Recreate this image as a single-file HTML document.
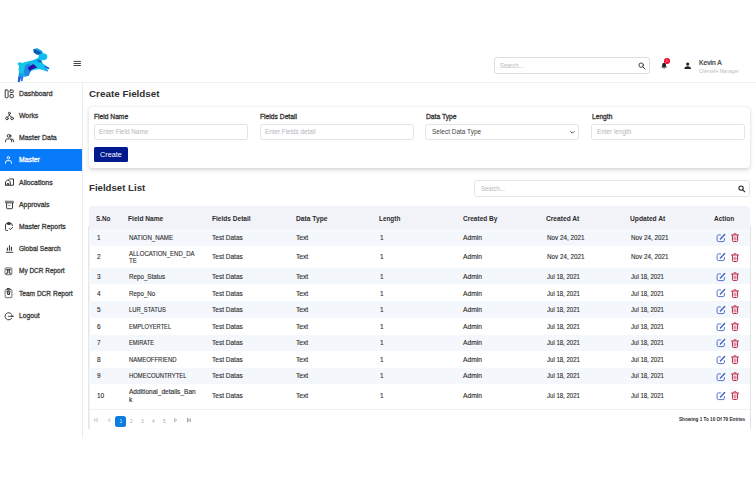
<!DOCTYPE html>
<html><head><meta charset="utf-8"><title>Fieldset</title>
<style>
*{box-sizing:border-box;margin:0;padding:0}
html,body{width:756px;height:486px;background:#fff;overflow:hidden}
body{font-family:"Liberation Sans",sans-serif;position:relative;color:#333}
.t{position:absolute;white-space:nowrap;display:block;transform-origin:0 50%;line-height:12px}
.abs{position:absolute}
.inp{position:absolute;border:1px solid #e1e4e9;border-radius:2.5px;background:#fff}
.row{position:absolute;left:88.7px;width:661.6px}
.ic{position:absolute;overflow:visible}
</style></head><body>

<div class="abs" style="left:0;top:81.7px;width:756px;height:1px;background:#f0f0f0"></div>
<div class="abs" style="left:82px;top:82px;width:1px;height:355.5px;background:#ececec"></div>
<svg class="ic" style="left:10px;top:42px" width="54" height="44" viewBox="0 0 596 486">
<polygon points="255,80 300,73 345,96 364,128 332,144 290,138 262,114" fill="#0b58b4"/>
<polygon points="262,78 305,73 352,100 364,128 338,112 300,92" fill="#0aa6ee"/>
<ellipse cx="363" cy="163" rx="49" ry="38" fill="#14c8f2"/>
<polygon points="316,150 360,132 402,150 410,176 372,198 330,188" fill="#10beee"/>
<polygon points="118,238 260,198 322,168 356,232 308,292 226,324 206,374 150,386 106,374 96,300 106,250" fill="#10b8ee"/>
<polygon points="118,238 205,214 175,300 150,386 106,374 96,300 106,250" fill="#15c6e8"/>
<polygon points="172,250 218,234 228,324 206,374 165,382 150,330" fill="#1f88e4"/>
<polygon points="306,192 345,200 362,240 330,232 300,212" fill="#0b78c4"/>
<ellipse cx="108" cy="242" rx="25" ry="18" fill="#12c0ee"/>
<polygon points="270,232 345,226 434,286 428,302 402,294 420,312 414,326 330,302 268,304 250,282" fill="#12c2f0"/>
<polygon points="380,262 436,286 428,302 385,282" fill="#2a58e2"/>
<polygon points="385,302 420,312 414,326 388,316" fill="#3a90ea"/>
<polygon points="198,282 258,244 300,282 244,302 214,320" fill="#2a0aa8"/>
<polygon points="98,340 152,350 134,432 118,434 122,382 104,442 86,438" fill="#169fea"/>
<polygon points="94,380 122,384 104,444 86,440" fill="#2f4fe0"/>
<polygon points="124,396 148,386 136,434 120,434" fill="#1f7fe6"/>
</svg>
<svg class="ic" style="left:73px;top:60px" width="9" height="7" viewBox="0 0 9 7" fill="none" stroke="#3a3a3a" stroke-width=".95" stroke-linecap="round"><path d="M.9 1.400H7.500M.9 3.500H7.500M.9 5.500H7.500"/></svg>
<div class="inp" style="left:494.4px;top:57.2px;width:155.4px;height:16.9px;border-color:#dcdfe4"></div>
<span class="t m " style="left:499.70px;top:60px;font-size:7.0px;color:#b5b8be;transform:scaleX(0.8317);">Search...</span>
<svg class="ic" style="left:638px;top:62px" width="7.6" height="7.6" viewBox="0 0 24 24" fill="none" stroke="#3a3a3a" stroke-width="3.1" stroke-linecap="round"><circle cx="10" cy="10" r="7"/><path d="M15.5 15.5L22 22"/></svg>
<svg class="ic" style="left:660.5px;top:62.1px" width="6.2" height="7.2" viewBox="0 0 20 22"><path d="M10 1.5c-3.6 0-6 2.7-6 6.2v4.6L1.5 16v1.5h17V16L16 12.3V7.700c0-3.500-2.400-6.200-6-6.200z" fill="#222"/><path d="M7.500 19a2.600 2.600 0 0 0 5 0z" fill="#222"/></svg>
<div class="abs" style="left:664.3px;top:58.3px;width:5.5px;height:5.5px;border-radius:50%;background:#f5143c"></div>
<span class="t" style="left:666.1px;top:59.7px;font-size:3px;line-height:3px;color:#ffb0c0">0</span>
<svg class="ic" style="left:683.8px;top:62px" width="7.4" height="7.2" viewBox="0 0 24 24"><circle cx="12" cy="7" r="5.2" fill="#222"/><path d="M1 23c0-6 4-9 11-9s11 3 11 9z" fill="#222"/></svg>
<span class="t m " style="left:699.20px;top:57px;font-size:7.0px;color:#3a3a3a;-webkit-text-stroke:0.22px #3a3a3a;transform:scaleX(0.9605);">Kevin A</span>
<span class="t m " style="left:699.20px;top:65px;font-size:5.4px;color:#bdbdbd;transform:scaleX(0.9127);">Clientele Manager</span>
<svg class="ic" style="left:4px;top:88.60px" width="11" height="11" viewBox="0 0 11 11" fill="none" stroke="#3a3a3a" stroke-width="1" stroke-linecap="round" stroke-linejoin="round"><rect x="1.2" y="1.0" width="2.900" height="7.700" rx=".7"/><rect x="6.000" y="1.0" width="3.300" height="2.600" rx=".7"/><rect x="6.000" y="5.500" width="3.300" height="3.200" rx=".7"/></svg>
<span class="t m sb" style="left:19.10px;top:88px;font-size:6.9px;color:#3d3d3d;-webkit-text-stroke:0.3px #3d3d3d;transform:scaleX(0.9924);">Dashboard</span>
<svg class="ic" style="left:4px;top:110.80px" width="11" height="11" viewBox="0 0 11 11" fill="none" stroke="#3a3a3a" stroke-width="1" stroke-linecap="round" stroke-linejoin="round"><circle cx="5.400" cy="2.300" r="1.050"/><circle cx="3.0" cy="7.400" r="1.350"/><circle cx="8.100" cy="7.400" r="1.350"/><path d="M5.400 3.400V4.300M5.400 4.200L3.600 6.100M5.400 4.200L7.500 6.100"/></svg>
<span class="t m sb" style="left:19.10px;top:110px;font-size:6.9px;color:#3d3d3d;-webkit-text-stroke:0.3px #3d3d3d;transform:scaleX(0.9936);">Works</span>
<svg class="ic" style="left:4px;top:133.00px" width="11" height="11" viewBox="0 0 11 11" fill="none" stroke="#3a3a3a" stroke-width="1" stroke-linecap="round" stroke-linejoin="round"><circle cx="4.600" cy="2.900" r="1.400"/><path d="M6.100 1.600a1.400 1.400 0 0 1 0 2.700" /><path d="M1.500 8.800V8.100a2.200 2.200 0 0 1 2.200-2.200h1.800a2.200 2.200 0 0 1 2.200 2.200v.7"/><path d="M7.300 5.900a2.200 2.200 0 0 1 2.300 2.200v.7"/></svg>
<span class="t m sb" style="left:19.10px;top:132px;font-size:6.9px;color:#3d3d3d;-webkit-text-stroke:0.3px #3d3d3d;transform:scaleX(1.0032);">Master Data</span>
<div class="abs" style="left:0;top:149px;width:82.2px;height:22px;background:#087bfa"></div>
<svg class="ic" style="left:4px;top:155.20px" width="11" height="11" viewBox="0 0 11 11" fill="none" stroke="#fff" stroke-width="1" stroke-linecap="round" stroke-linejoin="round"><circle cx="4.400" cy="2.700" r="1.200"/><path d="M1.500 8.300V7.500a1.800 1.800 0 0 1 1.800-1.800h2.400a1.800 1.800 0 0 1 1.800 1.800v.8"/></svg>
<span class="t m sb" style="left:19.10px;top:154px;font-size:6.9px;color:#fff;-webkit-text-stroke:0.3px #fff;transform:scaleX(0.9911);">Master</span>
<svg class="ic" style="left:4px;top:177.40px" width="11" height="11" viewBox="0 0 11 11" fill="none" stroke="#3a3a3a" stroke-width="1" stroke-linecap="round" stroke-linejoin="round"><path d="M1.500 8.200V4.700L3.900 2.800L6.300 4.700V8.200M1.500 8.200H9.500V2.000H5.500L4.500 2.900M3.200 8.100V6.400H4.600V8.100"/></svg>
<span class="t m sb" style="left:19.10px;top:177px;font-size:6.9px;color:#3d3d3d;-webkit-text-stroke:0.3px #3d3d3d;transform:scaleX(1.0099);">Allocations</span>
<svg class="ic" style="left:4px;top:199.60px" width="11" height="11" viewBox="0 0 11 11" fill="none" stroke="#3a3a3a" stroke-width="1" stroke-linecap="round" stroke-linejoin="round"><rect x="1.400" y="1.200" width="8.200" height="1.900" rx=".5" fill="#8c8c8c" stroke="#666" stroke-width=".8"/><path d="M2.600 3.400V8.000a.7.7 0 0 0 .7.7H7.800a.7.7 0 0 0 .7-.7V3.400"/><path d="M4.700 5.400H6.300" stroke-width=".8" stroke="#777"/></svg>
<span class="t m sb" style="left:19.10px;top:199px;font-size:6.9px;color:#3d3d3d;-webkit-text-stroke:0.3px #3d3d3d;transform:scaleX(0.9940);">Approvals</span>
<svg class="ic" style="left:4px;top:221.80px" width="11" height="11" viewBox="0 0 11 11" fill="none" stroke="#3a3a3a" stroke-width="1" stroke-linecap="round" stroke-linejoin="round"><path d="M3.500 8.500H2.300a.8.8 0 0 1-.8-.8V2.500a.8.8 0 0 1 .8-.8H7.400a.8.800 0 0 1 .8.800V3.800"/><rect x="3.500" y=".6" width="2.900" height="1.900" rx=".6" fill="#444"/><path d="M5.300 6.500L6.300 7.500L8.700 5.400"/></svg>
<span class="t m sb" style="left:19.10px;top:221px;font-size:6.9px;color:#3d3d3d;-webkit-text-stroke:0.3px #3d3d3d;transform:scaleX(0.9922);">Master Reports</span>
<svg class="ic" style="left:4px;top:244.00px" width="11" height="11" viewBox="0 0 11 11" fill="none" stroke="#3a3a3a" stroke-width="1" stroke-linecap="round" stroke-linejoin="round"><path d="M3.400 4.000V6.200M5.500 1.700V6.200M7.500 3.200V6.200" stroke-width="1.150"/><path d="M2.300 8.300H8.800"/></svg>
<span class="t m sb" style="left:19.10px;top:243px;font-size:6.9px;color:#3d3d3d;-webkit-text-stroke:0.3px #3d3d3d;transform:scaleX(0.9560);">Global Search</span>
<svg class="ic" style="left:4px;top:266.20px" width="11" height="11" viewBox="0 0 11 11" fill="none" stroke="#3a3a3a" stroke-width="1" stroke-linecap="round" stroke-linejoin="round"><rect x="1.100" y="1.900" width="6.700" height="6.800" rx="1.200" stroke="#8a8a8a" stroke-width="1.200"/><path d="M2.500 3.700H6.400M3.700 4.000V6.700M5.300 4.000V6.700M2.300 7.300h.8M5.900 7.300h.8" stroke="#2a2a2a"/></svg>
<span class="t m sb" style="left:19.10px;top:265px;font-size:6.9px;color:#3d3d3d;-webkit-text-stroke:0.3px #3d3d3d;transform:scaleX(0.9386);">My DCR Report</span>
<svg class="ic" style="left:4px;top:288.40px" width="11" height="11" viewBox="0 0 11 11" fill="none" stroke="#3a3a3a" stroke-width="1" stroke-linecap="round" stroke-linejoin="round"><rect x="1.100" y="1.500" width="6.800" height="8.100" rx="1.300" stroke="#8a8a8a" stroke-width="1.200"/><rect x="2.700" y=".5" width="3.600" height="1.700" rx=".85" stroke="#3a3a3a"/><path d="M2.700 3.800H6.300M3.700 4.000V6.400M5.500 4.800V6.400M4.600 6.200v.4" stroke="#2a2a2a"/></svg>
<span class="t m sb" style="left:19.10px;top:288px;font-size:6.9px;color:#3d3d3d;-webkit-text-stroke:0.3px #3d3d3d;transform:scaleX(0.9527);">Team DCR Report</span>
<svg class="ic" style="left:4px;top:310.60px" width="11" height="11" viewBox="0 0 11 11" fill="none" stroke="#3a3a3a" stroke-width="1" stroke-linecap="round" stroke-linejoin="round"><path d="M7.650 3.240A3.600 3.600 0 1 0 7.650 7.360"/><path d="M4.300 5.300H8.600" stroke="#777" stroke-width="1.200"/><path d="M7.400 5.300H9.000" stroke-width="1.500"/></svg>
<span class="t m sb" style="left:19.10px;top:310px;font-size:6.9px;color:#3d3d3d;-webkit-text-stroke:0.3px #3d3d3d;transform:scaleX(0.9808);">Logout</span>
<span class="t m " style="left:88.90px;top:88px;font-size:9.5px;color:#2f2f2f;font-weight:bold;transform:scaleX(1.0365);">Create Fieldset</span>
<div class="abs" style="left:88.7px;top:106.7px;width:661.6px;height:61.3px;border-radius:3.5px;background:#fff;box-shadow:0 1.5px 4px rgba(0,0,0,.16),0 0 1px rgba(0,0,0,.10)"></div>
<span class="t m " style="left:93.90px;top:111px;font-size:6.9px;color:#333;-webkit-text-stroke:0.3px #333;transform:scaleX(0.9694);">Field Name</span>
<div class="inp" style="left:93.7px;top:124.2px;width:154.4px;height:15.6px"></div>
<span class="t m " style="left:98.80px;top:126px;font-size:7.1px;color:#b5b8be;transform:scaleX(0.8906);">Enter Field Name</span>
<span class="t m " style="left:260.05px;top:111px;font-size:6.9px;color:#333;-webkit-text-stroke:0.3px #333;transform:scaleX(0.9746);">Fields Detail</span>
<div class="inp" style="left:259.5px;top:124.2px;width:154px;height:15.6px"></div>
<span class="t m " style="left:264.70px;top:126px;font-size:7.1px;color:#b5b8be;transform:scaleX(0.8904);">Enter Fields detail</span>
<span class="t m " style="left:425.85px;top:111px;font-size:6.9px;color:#333;-webkit-text-stroke:0.3px #333;transform:scaleX(0.9736);">Data Type</span>
<div class="inp" style="left:425.3px;top:124.2px;width:154px;height:15.6px"></div>
<span class="t m " style="left:431.70px;top:126px;font-size:7.1px;color:#444;transform:scaleX(0.9103);">Select Data Type</span>
<span class="t m " style="left:591.75px;top:111px;font-size:6.9px;color:#333;-webkit-text-stroke:0.3px #333;transform:scaleX(0.9666);">Length</span>
<div class="inp" style="left:591.2px;top:124.2px;width:154.1px;height:15.6px"></div>
<span class="t m " style="left:596.70px;top:126px;font-size:7.1px;color:#b5b8be;transform:scaleX(0.8958);">Enter length</span>
<svg class="ic" style="left:570px;top:131.2px" width="4.6" height="3" viewBox="0 0 9 6" fill="none" stroke="#333" stroke-width="1.700" stroke-linecap="round" stroke-linejoin="round"><path d="M1 1l3.500 3.500L8 1"/></svg>
<div class="abs" style="left:93.8px;top:147.2px;width:34.4px;height:14.5px;border-radius:1.5px;background:#00198c"></div>
<span class="t m " style="left:100.20px;top:149px;font-size:7.3px;color:#fff;transform:scaleX(0.9949);">Create</span>
<span class="t m " style="left:88.90px;top:182px;font-size:9.5px;color:#2f2f2f;font-weight:bold;transform:scaleX(1.0139);">Fieldset List</span>
<div class="inp" style="left:474.3px;top:180.3px;width:276.1px;height:16.6px;border-color:#e3e5e9"></div>
<span class="t m " style="left:480.80px;top:183px;font-size:7.0px;color:#b5b8be;transform:scaleX(0.8531);">Search...</span>
<svg class="ic" style="left:737.8px;top:185.3px" width="7.4" height="7.4" viewBox="0 0 24 24" fill="none" stroke="#222" stroke-width="3.4" stroke-linecap="round"><circle cx="10" cy="10" r="7"/><path d="M15.500 15.500L22 22"/></svg>
<div class="abs" style="left:88px;top:226px;width:2px;height:203.4px;background:linear-gradient(to right,#e2e2e2,#f4f4f4)"></div>
<div class="abs" style="left:749.5px;top:226px;width:1px;height:203.4px;background:#e4e4e4"></div>
<div class="row" style="top:205.8px;height:23.4px;background:#f2f3f9;border-radius:4px 4px 0 0"></div>
<span class="t m " style="left:95.80px;top:213px;font-size:7.0px;color:#2b2b2b;font-weight:bold;transform:scaleX(0.9094);">S.No</span>
<span class="t m " style="left:128.00px;top:213px;font-size:7.0px;color:#2b2b2b;font-weight:bold;transform:scaleX(0.9452);">Field Name</span>
<span class="t m " style="left:211.70px;top:213px;font-size:7.0px;color:#2b2b2b;font-weight:bold;transform:scaleX(0.9361);">Fields Detail</span>
<span class="t m " style="left:295.50px;top:213px;font-size:7.0px;color:#2b2b2b;font-weight:bold;transform:scaleX(0.9564);">Data Type</span>
<span class="t m " style="left:379.20px;top:213px;font-size:7.0px;color:#2b2b2b;font-weight:bold;transform:scaleX(0.9130);">Length</span>
<span class="t m " style="left:462.80px;top:213px;font-size:7.0px;color:#2b2b2b;font-weight:bold;transform:scaleX(0.9307);">Created By</span>
<span class="t m " style="left:546.40px;top:213px;font-size:7.0px;color:#2b2b2b;font-weight:bold;transform:scaleX(0.9477);">Created At</span>
<span class="t m " style="left:629.90px;top:213px;font-size:7.0px;color:#2b2b2b;font-weight:bold;transform:scaleX(0.9522);">Updated At</span>
<span class="t m " style="left:713.70px;top:213px;font-size:7.0px;color:#2b2b2b;font-weight:bold;transform:scaleX(0.9230);">Action</span>
<div class="row" style="top:229.17px;height:16.67px;background:#f4f7fc"></div>
<span class="t m " style="left:97.20px;top:232px;font-size:7.0px;color:#2c2c2c;-webkit-text-stroke:0.12px #2c2c2c;transform:scaleX(0.9200);">1</span>
<span class="t m nm" style="left:128.60px;top:232px;font-size:7.0px;color:#2c2c2c;-webkit-text-stroke:0.12px #2c2c2c;transform:scaleX(0.8812);">NATION_NAME</span>
<span class="t m " style="left:212.20px;top:232px;font-size:7.0px;color:#2c2c2c;-webkit-text-stroke:0.12px #2c2c2c;transform:scaleX(0.9314);">Test Datas</span>
<span class="t m " style="left:295.80px;top:232px;font-size:7.0px;color:#2c2c2c;-webkit-text-stroke:0.12px #2c2c2c;transform:scaleX(0.9503);">Text</span>
<span class="t m " style="left:380.00px;top:232px;font-size:7.0px;color:#2c2c2c;-webkit-text-stroke:0.12px #2c2c2c;transform:scaleX(0.9200);">1</span>
<span class="t m " style="left:463.00px;top:232px;font-size:7.0px;color:#2c2c2c;-webkit-text-stroke:0.12px #2c2c2c;transform:scaleX(0.9576);">Admin</span>
<span class="t m dt" style="left:546.90px;top:232px;font-size:7.0px;color:#2c2c2c;-webkit-text-stroke:0.12px #2c2c2c;transform:scaleX(0.9005);">Nov 24, 2021</span>
<span class="t m dt" style="left:630.90px;top:232px;font-size:7.0px;color:#2c2c2c;-webkit-text-stroke:0.12px #2c2c2c;transform:scaleX(0.9005);">Nov 24, 2021</span>
<svg class="ic" style="left:716px;top:232.90px" width="10" height="10" viewBox="0 0 20 20" fill="none" stroke="#4463c6" stroke-width="1.800" stroke-linecap="round" stroke-linejoin="round"><path d="M9 3.800H5.200a3 3 0 0 0-3 3V14.200a3 3 0 0 0 3 3H13.800a3 3 0 0 0 3-3V11"/><path d="M8.800 11.800L17.300 3.200" stroke-width="2.900"/></svg>
<svg class="ic" style="left:731px;top:233.30px" width="8" height="9" viewBox="0 0 16 18" fill="none" stroke="#bb2d4b" stroke-linecap="round" stroke-linejoin="round"><path d="M1 4h14" stroke-width="2"/><path d="M5.800 3.200V1.700a.6.600 0 0 1 .6-.6h3.200a.6.600 0 0 1 .6.600V3.200" stroke-width="1.500"/><path d="M2.900 4.800V15.200a1.800 1.800 0 0 0 1.800 1.800h6.600a1.800 1.800 0 0 0 1.800-1.800V4.800" stroke-width="2"/><path d="M6.300 8v6M9.700 8v6" stroke-width="1.500"/></svg>
<span class="t m " style="left:97.20px;top:251px;font-size:7.0px;color:#2c2c2c;-webkit-text-stroke:0.12px #2c2c2c;transform:scaleX(0.9200);">2</span>
<span class="t m nm" style="left:128.60px;top:248px;font-size:7.0px;color:#2c2c2c;-webkit-text-stroke:0.12px #2c2c2c;transform:scaleX(0.8605);">ALLOCATION_END_DA</span>
<span class="t m " style="left:128.60px;top:255px;font-size:7.0px;color:#2c2c2c;-webkit-text-stroke:0.12px #2c2c2c;transform:scaleX(0.8600);">TE</span>
<span class="t m " style="left:212.20px;top:251px;font-size:7.0px;color:#2c2c2c;-webkit-text-stroke:0.12px #2c2c2c;transform:scaleX(0.9314);">Test Datas</span>
<span class="t m " style="left:295.80px;top:251px;font-size:7.0px;color:#2c2c2c;-webkit-text-stroke:0.12px #2c2c2c;transform:scaleX(0.9503);">Text</span>
<span class="t m " style="left:380.00px;top:251px;font-size:7.0px;color:#2c2c2c;-webkit-text-stroke:0.12px #2c2c2c;transform:scaleX(0.9200);">1</span>
<span class="t m " style="left:463.00px;top:251px;font-size:7.0px;color:#2c2c2c;-webkit-text-stroke:0.12px #2c2c2c;transform:scaleX(0.9576);">Admin</span>
<span class="t m dt" style="left:546.90px;top:251px;font-size:7.0px;color:#2c2c2c;-webkit-text-stroke:0.12px #2c2c2c;transform:scaleX(0.9005);">Nov 24, 2021</span>
<span class="t m dt" style="left:630.90px;top:251px;font-size:7.0px;color:#2c2c2c;-webkit-text-stroke:0.12px #2c2c2c;transform:scaleX(0.9005);">Nov 24, 2021</span>
<svg class="ic" style="left:716px;top:252.24px" width="10" height="10" viewBox="0 0 20 20" fill="none" stroke="#4463c6" stroke-width="1.800" stroke-linecap="round" stroke-linejoin="round"><path d="M9 3.800H5.200a3 3 0 0 0-3 3V14.200a3 3 0 0 0 3 3H13.800a3 3 0 0 0 3-3V11"/><path d="M8.800 11.800L17.300 3.200" stroke-width="2.900"/></svg>
<svg class="ic" style="left:731px;top:252.64px" width="8" height="9" viewBox="0 0 16 18" fill="none" stroke="#bb2d4b" stroke-linecap="round" stroke-linejoin="round"><path d="M1 4h14" stroke-width="2"/><path d="M5.800 3.200V1.700a.6.600 0 0 1 .6-.6h3.200a.6.600 0 0 1 .6.600V3.200" stroke-width="1.500"/><path d="M2.900 4.800V15.200a1.800 1.800 0 0 0 1.800 1.800h6.600a1.800 1.800 0 0 0 1.800-1.800V4.800" stroke-width="2"/><path d="M6.300 8v6M9.700 8v6" stroke-width="1.500"/></svg>
<div class="row" style="top:267.84px;height:16.67px;background:#f4f7fc"></div>
<span class="t m " style="left:97.20px;top:271px;font-size:7.0px;color:#2c2c2c;-webkit-text-stroke:0.12px #2c2c2c;transform:scaleX(0.9200);">3</span>
<span class="t m nm" style="left:128.60px;top:271px;font-size:7.0px;color:#2c2c2c;-webkit-text-stroke:0.12px #2c2c2c;transform:scaleX(0.8895);">Repo_Status</span>
<span class="t m " style="left:212.20px;top:271px;font-size:7.0px;color:#2c2c2c;-webkit-text-stroke:0.12px #2c2c2c;transform:scaleX(0.9314);">Test Datas</span>
<span class="t m " style="left:295.80px;top:271px;font-size:7.0px;color:#2c2c2c;-webkit-text-stroke:0.12px #2c2c2c;transform:scaleX(0.9503);">Text</span>
<span class="t m " style="left:380.00px;top:271px;font-size:7.0px;color:#2c2c2c;-webkit-text-stroke:0.12px #2c2c2c;transform:scaleX(0.9200);">1</span>
<span class="t m " style="left:463.00px;top:271px;font-size:7.0px;color:#2c2c2c;-webkit-text-stroke:0.12px #2c2c2c;transform:scaleX(0.9576);">Admin</span>
<span class="t m dt" style="left:546.90px;top:271px;font-size:7.0px;color:#2c2c2c;-webkit-text-stroke:0.12px #2c2c2c;transform:scaleX(0.8626);">Jul 18, 2021</span>
<span class="t m dt" style="left:630.90px;top:271px;font-size:7.0px;color:#2c2c2c;-webkit-text-stroke:0.12px #2c2c2c;transform:scaleX(0.8626);">Jul 18, 2021</span>
<svg class="ic" style="left:716px;top:271.57px" width="10" height="10" viewBox="0 0 20 20" fill="none" stroke="#4463c6" stroke-width="1.800" stroke-linecap="round" stroke-linejoin="round"><path d="M9 3.800H5.200a3 3 0 0 0-3 3V14.200a3 3 0 0 0 3 3H13.800a3 3 0 0 0 3-3V11"/><path d="M8.800 11.800L17.300 3.200" stroke-width="2.900"/></svg>
<svg class="ic" style="left:731px;top:271.97px" width="8" height="9" viewBox="0 0 16 18" fill="none" stroke="#bb2d4b" stroke-linecap="round" stroke-linejoin="round"><path d="M1 4h14" stroke-width="2"/><path d="M5.800 3.200V1.700a.6.600 0 0 1 .6-.6h3.200a.6.600 0 0 1 .6.600V3.200" stroke-width="1.500"/><path d="M2.900 4.800V15.200a1.800 1.800 0 0 0 1.800 1.800h6.600a1.800 1.800 0 0 0 1.800-1.800V4.800" stroke-width="2"/><path d="M6.300 8v6M9.700 8v6" stroke-width="1.500"/></svg>
<span class="t m " style="left:97.20px;top:288px;font-size:7.0px;color:#2c2c2c;-webkit-text-stroke:0.12px #2c2c2c;transform:scaleX(0.9200);">4</span>
<span class="t m nm" style="left:128.60px;top:288px;font-size:7.0px;color:#2c2c2c;-webkit-text-stroke:0.12px #2c2c2c;transform:scaleX(0.8892);">Repo_No</span>
<span class="t m " style="left:212.20px;top:288px;font-size:7.0px;color:#2c2c2c;-webkit-text-stroke:0.12px #2c2c2c;transform:scaleX(0.9314);">Test Datas</span>
<span class="t m " style="left:295.80px;top:288px;font-size:7.0px;color:#2c2c2c;-webkit-text-stroke:0.12px #2c2c2c;transform:scaleX(0.9503);">Text</span>
<span class="t m " style="left:380.00px;top:288px;font-size:7.0px;color:#2c2c2c;-webkit-text-stroke:0.12px #2c2c2c;transform:scaleX(0.9200);">1</span>
<span class="t m " style="left:463.00px;top:288px;font-size:7.0px;color:#2c2c2c;-webkit-text-stroke:0.12px #2c2c2c;transform:scaleX(0.9576);">Admin</span>
<span class="t m dt" style="left:546.90px;top:288px;font-size:7.0px;color:#2c2c2c;-webkit-text-stroke:0.12px #2c2c2c;transform:scaleX(0.8626);">Jul 18, 2021</span>
<span class="t m dt" style="left:630.90px;top:288px;font-size:7.0px;color:#2c2c2c;-webkit-text-stroke:0.12px #2c2c2c;transform:scaleX(0.8626);">Jul 18, 2021</span>
<svg class="ic" style="left:716px;top:288.24px" width="10" height="10" viewBox="0 0 20 20" fill="none" stroke="#4463c6" stroke-width="1.800" stroke-linecap="round" stroke-linejoin="round"><path d="M9 3.800H5.200a3 3 0 0 0-3 3V14.200a3 3 0 0 0 3 3H13.800a3 3 0 0 0 3-3V11"/><path d="M8.800 11.800L17.300 3.200" stroke-width="2.900"/></svg>
<svg class="ic" style="left:731px;top:288.64px" width="8" height="9" viewBox="0 0 16 18" fill="none" stroke="#bb2d4b" stroke-linecap="round" stroke-linejoin="round"><path d="M1 4h14" stroke-width="2"/><path d="M5.800 3.200V1.700a.6.600 0 0 1 .6-.6h3.200a.6.600 0 0 1 .6.600V3.200" stroke-width="1.500"/><path d="M2.900 4.800V15.200a1.800 1.800 0 0 0 1.800 1.800h6.600a1.800 1.800 0 0 0 1.800-1.800V4.800" stroke-width="2"/><path d="M6.300 8v6M9.700 8v6" stroke-width="1.500"/></svg>
<div class="row" style="top:301.17px;height:16.67px;background:#f4f7fc"></div>
<span class="t m " style="left:97.20px;top:304px;font-size:7.0px;color:#2c2c2c;-webkit-text-stroke:0.12px #2c2c2c;transform:scaleX(0.9200);">5</span>
<span class="t m nm" style="left:128.60px;top:304px;font-size:7.0px;color:#2c2c2c;-webkit-text-stroke:0.12px #2c2c2c;transform:scaleX(0.8275);">LUR_STATUS</span>
<span class="t m " style="left:212.20px;top:304px;font-size:7.0px;color:#2c2c2c;-webkit-text-stroke:0.12px #2c2c2c;transform:scaleX(0.9314);">Test Datas</span>
<span class="t m " style="left:295.80px;top:304px;font-size:7.0px;color:#2c2c2c;-webkit-text-stroke:0.12px #2c2c2c;transform:scaleX(0.9503);">Text</span>
<span class="t m " style="left:380.00px;top:304px;font-size:7.0px;color:#2c2c2c;-webkit-text-stroke:0.12px #2c2c2c;transform:scaleX(0.9200);">1</span>
<span class="t m " style="left:463.00px;top:304px;font-size:7.0px;color:#2c2c2c;-webkit-text-stroke:0.12px #2c2c2c;transform:scaleX(0.9576);">Admin</span>
<span class="t m dt" style="left:546.90px;top:304px;font-size:7.0px;color:#2c2c2c;-webkit-text-stroke:0.12px #2c2c2c;transform:scaleX(0.8626);">Jul 18, 2021</span>
<span class="t m dt" style="left:630.90px;top:304px;font-size:7.0px;color:#2c2c2c;-webkit-text-stroke:0.12px #2c2c2c;transform:scaleX(0.8626);">Jul 18, 2021</span>
<svg class="ic" style="left:716px;top:304.90px" width="10" height="10" viewBox="0 0 20 20" fill="none" stroke="#4463c6" stroke-width="1.800" stroke-linecap="round" stroke-linejoin="round"><path d="M9 3.800H5.200a3 3 0 0 0-3 3V14.200a3 3 0 0 0 3 3H13.800a3 3 0 0 0 3-3V11"/><path d="M8.800 11.800L17.300 3.200" stroke-width="2.900"/></svg>
<svg class="ic" style="left:731px;top:305.30px" width="8" height="9" viewBox="0 0 16 18" fill="none" stroke="#bb2d4b" stroke-linecap="round" stroke-linejoin="round"><path d="M1 4h14" stroke-width="2"/><path d="M5.800 3.200V1.700a.6.600 0 0 1 .6-.6h3.200a.6.600 0 0 1 .6.600V3.200" stroke-width="1.500"/><path d="M2.900 4.800V15.200a1.800 1.800 0 0 0 1.800 1.800h6.600a1.800 1.800 0 0 0 1.800-1.800V4.800" stroke-width="2"/><path d="M6.300 8v6M9.700 8v6" stroke-width="1.500"/></svg>
<span class="t m " style="left:97.20px;top:321px;font-size:7.0px;color:#2c2c2c;-webkit-text-stroke:0.12px #2c2c2c;transform:scaleX(0.9200);">6</span>
<span class="t m nm" style="left:128.60px;top:321px;font-size:7.0px;color:#2c2c2c;-webkit-text-stroke:0.12px #2c2c2c;transform:scaleX(0.8157);">EMPLOYERTEL</span>
<span class="t m " style="left:212.20px;top:321px;font-size:7.0px;color:#2c2c2c;-webkit-text-stroke:0.12px #2c2c2c;transform:scaleX(0.9314);">Test Datas</span>
<span class="t m " style="left:295.80px;top:321px;font-size:7.0px;color:#2c2c2c;-webkit-text-stroke:0.12px #2c2c2c;transform:scaleX(0.9503);">Text</span>
<span class="t m " style="left:380.00px;top:321px;font-size:7.0px;color:#2c2c2c;-webkit-text-stroke:0.12px #2c2c2c;transform:scaleX(0.9200);">1</span>
<span class="t m " style="left:463.00px;top:321px;font-size:7.0px;color:#2c2c2c;-webkit-text-stroke:0.12px #2c2c2c;transform:scaleX(0.9576);">Admin</span>
<span class="t m dt" style="left:546.90px;top:321px;font-size:7.0px;color:#2c2c2c;-webkit-text-stroke:0.12px #2c2c2c;transform:scaleX(0.8626);">Jul 18, 2021</span>
<span class="t m dt" style="left:630.90px;top:321px;font-size:7.0px;color:#2c2c2c;-webkit-text-stroke:0.12px #2c2c2c;transform:scaleX(0.8626);">Jul 18, 2021</span>
<svg class="ic" style="left:716px;top:321.57px" width="10" height="10" viewBox="0 0 20 20" fill="none" stroke="#4463c6" stroke-width="1.800" stroke-linecap="round" stroke-linejoin="round"><path d="M9 3.800H5.200a3 3 0 0 0-3 3V14.200a3 3 0 0 0 3 3H13.800a3 3 0 0 0 3-3V11"/><path d="M8.800 11.800L17.300 3.200" stroke-width="2.900"/></svg>
<svg class="ic" style="left:731px;top:321.97px" width="8" height="9" viewBox="0 0 16 18" fill="none" stroke="#bb2d4b" stroke-linecap="round" stroke-linejoin="round"><path d="M1 4h14" stroke-width="2"/><path d="M5.800 3.200V1.700a.6.600 0 0 1 .6-.6h3.200a.6.600 0 0 1 .6.600V3.200" stroke-width="1.500"/><path d="M2.900 4.800V15.200a1.800 1.800 0 0 0 1.800 1.800h6.600a1.800 1.800 0 0 0 1.800-1.800V4.800" stroke-width="2"/><path d="M6.300 8v6M9.700 8v6" stroke-width="1.500"/></svg>
<div class="row" style="top:334.51px;height:16.67px;background:#f4f7fc"></div>
<span class="t m " style="left:97.20px;top:337px;font-size:7.0px;color:#2c2c2c;-webkit-text-stroke:0.12px #2c2c2c;transform:scaleX(0.9200);">7</span>
<span class="t m nm" style="left:128.60px;top:337px;font-size:7.0px;color:#2c2c2c;-webkit-text-stroke:0.12px #2c2c2c;transform:scaleX(0.8204);">EMIRATE</span>
<span class="t m " style="left:212.20px;top:337px;font-size:7.0px;color:#2c2c2c;-webkit-text-stroke:0.12px #2c2c2c;transform:scaleX(0.9314);">Test Datas</span>
<span class="t m " style="left:295.80px;top:337px;font-size:7.0px;color:#2c2c2c;-webkit-text-stroke:0.12px #2c2c2c;transform:scaleX(0.9503);">Text</span>
<span class="t m " style="left:380.00px;top:337px;font-size:7.0px;color:#2c2c2c;-webkit-text-stroke:0.12px #2c2c2c;transform:scaleX(0.9200);">1</span>
<span class="t m " style="left:463.00px;top:337px;font-size:7.0px;color:#2c2c2c;-webkit-text-stroke:0.12px #2c2c2c;transform:scaleX(0.9576);">Admin</span>
<span class="t m dt" style="left:546.90px;top:337px;font-size:7.0px;color:#2c2c2c;-webkit-text-stroke:0.12px #2c2c2c;transform:scaleX(0.8626);">Jul 18, 2021</span>
<span class="t m dt" style="left:630.90px;top:337px;font-size:7.0px;color:#2c2c2c;-webkit-text-stroke:0.12px #2c2c2c;transform:scaleX(0.8626);">Jul 18, 2021</span>
<svg class="ic" style="left:716px;top:338.24px" width="10" height="10" viewBox="0 0 20 20" fill="none" stroke="#4463c6" stroke-width="1.800" stroke-linecap="round" stroke-linejoin="round"><path d="M9 3.800H5.200a3 3 0 0 0-3 3V14.200a3 3 0 0 0 3 3H13.800a3 3 0 0 0 3-3V11"/><path d="M8.800 11.800L17.300 3.200" stroke-width="2.900"/></svg>
<svg class="ic" style="left:731px;top:338.64px" width="8" height="9" viewBox="0 0 16 18" fill="none" stroke="#bb2d4b" stroke-linecap="round" stroke-linejoin="round"><path d="M1 4h14" stroke-width="2"/><path d="M5.800 3.200V1.700a.6.600 0 0 1 .6-.6h3.200a.6.600 0 0 1 .6.600V3.200" stroke-width="1.500"/><path d="M2.900 4.800V15.200a1.800 1.800 0 0 0 1.800 1.800h6.600a1.800 1.800 0 0 0 1.800-1.800V4.800" stroke-width="2"/><path d="M6.300 8v6M9.700 8v6" stroke-width="1.500"/></svg>
<span class="t m " style="left:97.20px;top:354px;font-size:7.0px;color:#2c2c2c;-webkit-text-stroke:0.12px #2c2c2c;transform:scaleX(0.9200);">8</span>
<span class="t m nm" style="left:128.60px;top:354px;font-size:7.0px;color:#2c2c2c;-webkit-text-stroke:0.12px #2c2c2c;transform:scaleX(0.8500);">NAMEOFFRIEND</span>
<span class="t m " style="left:212.20px;top:354px;font-size:7.0px;color:#2c2c2c;-webkit-text-stroke:0.12px #2c2c2c;transform:scaleX(0.9314);">Test Datas</span>
<span class="t m " style="left:295.80px;top:354px;font-size:7.0px;color:#2c2c2c;-webkit-text-stroke:0.12px #2c2c2c;transform:scaleX(0.9503);">Text</span>
<span class="t m " style="left:380.00px;top:354px;font-size:7.0px;color:#2c2c2c;-webkit-text-stroke:0.12px #2c2c2c;transform:scaleX(0.9200);">1</span>
<span class="t m " style="left:463.00px;top:354px;font-size:7.0px;color:#2c2c2c;-webkit-text-stroke:0.12px #2c2c2c;transform:scaleX(0.9576);">Admin</span>
<span class="t m dt" style="left:546.90px;top:354px;font-size:7.0px;color:#2c2c2c;-webkit-text-stroke:0.12px #2c2c2c;transform:scaleX(0.8626);">Jul 18, 2021</span>
<span class="t m dt" style="left:630.90px;top:354px;font-size:7.0px;color:#2c2c2c;-webkit-text-stroke:0.12px #2c2c2c;transform:scaleX(0.8626);">Jul 18, 2021</span>
<svg class="ic" style="left:716px;top:354.91px" width="10" height="10" viewBox="0 0 20 20" fill="none" stroke="#4463c6" stroke-width="1.800" stroke-linecap="round" stroke-linejoin="round"><path d="M9 3.800H5.200a3 3 0 0 0-3 3V14.200a3 3 0 0 0 3 3H13.800a3 3 0 0 0 3-3V11"/><path d="M8.800 11.800L17.300 3.200" stroke-width="2.900"/></svg>
<svg class="ic" style="left:731px;top:355.31px" width="8" height="9" viewBox="0 0 16 18" fill="none" stroke="#bb2d4b" stroke-linecap="round" stroke-linejoin="round"><path d="M1 4h14" stroke-width="2"/><path d="M5.800 3.200V1.700a.6.600 0 0 1 .6-.6h3.200a.6.600 0 0 1 .6.600V3.200" stroke-width="1.500"/><path d="M2.900 4.800V15.200a1.800 1.800 0 0 0 1.800 1.800h6.600a1.800 1.800 0 0 0 1.800-1.800V4.800" stroke-width="2"/><path d="M6.300 8v6M9.700 8v6" stroke-width="1.500"/></svg>
<div class="row" style="top:367.84px;height:16.67px;background:#f4f7fc"></div>
<span class="t m " style="left:97.20px;top:370px;font-size:7.0px;color:#2c2c2c;-webkit-text-stroke:0.12px #2c2c2c;transform:scaleX(0.9200);">9</span>
<span class="t m nm" style="left:128.60px;top:370px;font-size:7.0px;color:#2c2c2c;-webkit-text-stroke:0.12px #2c2c2c;transform:scaleX(0.8416);">HOMECOUNTRYTEL</span>
<span class="t m " style="left:212.20px;top:370px;font-size:7.0px;color:#2c2c2c;-webkit-text-stroke:0.12px #2c2c2c;transform:scaleX(0.9314);">Test Datas</span>
<span class="t m " style="left:295.80px;top:370px;font-size:7.0px;color:#2c2c2c;-webkit-text-stroke:0.12px #2c2c2c;transform:scaleX(0.9503);">Text</span>
<span class="t m " style="left:380.00px;top:370px;font-size:7.0px;color:#2c2c2c;-webkit-text-stroke:0.12px #2c2c2c;transform:scaleX(0.9200);">1</span>
<span class="t m " style="left:463.00px;top:370px;font-size:7.0px;color:#2c2c2c;-webkit-text-stroke:0.12px #2c2c2c;transform:scaleX(0.9576);">Admin</span>
<span class="t m dt" style="left:546.90px;top:370px;font-size:7.0px;color:#2c2c2c;-webkit-text-stroke:0.12px #2c2c2c;transform:scaleX(0.8626);">Jul 18, 2021</span>
<span class="t m dt" style="left:630.90px;top:370px;font-size:7.0px;color:#2c2c2c;-webkit-text-stroke:0.12px #2c2c2c;transform:scaleX(0.8626);">Jul 18, 2021</span>
<svg class="ic" style="left:716px;top:371.57px" width="10" height="10" viewBox="0 0 20 20" fill="none" stroke="#4463c6" stroke-width="1.800" stroke-linecap="round" stroke-linejoin="round"><path d="M9 3.800H5.200a3 3 0 0 0-3 3V14.200a3 3 0 0 0 3 3H13.800a3 3 0 0 0 3-3V11"/><path d="M8.800 11.800L17.300 3.200" stroke-width="2.900"/></svg>
<svg class="ic" style="left:731px;top:371.97px" width="8" height="9" viewBox="0 0 16 18" fill="none" stroke="#bb2d4b" stroke-linecap="round" stroke-linejoin="round"><path d="M1 4h14" stroke-width="2"/><path d="M5.800 3.200V1.700a.6.600 0 0 1 .6-.6h3.200a.6.600 0 0 1 .6.600V3.200" stroke-width="1.500"/><path d="M2.900 4.800V15.200a1.800 1.800 0 0 0 1.800 1.800h6.600a1.800 1.800 0 0 0 1.800-1.800V4.800" stroke-width="2"/><path d="M6.300 8v6M9.700 8v6" stroke-width="1.500"/></svg>
<span class="t m " style="left:96.80px;top:390px;font-size:7.0px;color:#2c2c2c;-webkit-text-stroke:0.12px #2c2c2c;transform:scaleX(0.9200);">10</span>
<span class="t m nm" style="left:128.60px;top:386px;font-size:7.0px;color:#2c2c2c;-webkit-text-stroke:0.12px #2c2c2c;transform:scaleX(0.9365);">Additional_details_Ban</span>
<span class="t m " style="left:128.60px;top:394px;font-size:7.0px;color:#2c2c2c;-webkit-text-stroke:0.12px #2c2c2c;transform:scaleX(0.9500);">k</span>
<span class="t m " style="left:212.20px;top:390px;font-size:7.0px;color:#2c2c2c;-webkit-text-stroke:0.12px #2c2c2c;transform:scaleX(0.9314);">Test Datas</span>
<span class="t m " style="left:295.80px;top:390px;font-size:7.0px;color:#2c2c2c;-webkit-text-stroke:0.12px #2c2c2c;transform:scaleX(0.9503);">Text</span>
<span class="t m " style="left:380.00px;top:390px;font-size:7.0px;color:#2c2c2c;-webkit-text-stroke:0.12px #2c2c2c;transform:scaleX(0.9200);">1</span>
<span class="t m " style="left:463.00px;top:390px;font-size:7.0px;color:#2c2c2c;-webkit-text-stroke:0.12px #2c2c2c;transform:scaleX(0.9576);">Admin</span>
<span class="t m dt" style="left:546.90px;top:390px;font-size:7.0px;color:#2c2c2c;-webkit-text-stroke:0.12px #2c2c2c;transform:scaleX(0.8626);">Jul 18, 2021</span>
<span class="t m dt" style="left:630.90px;top:390px;font-size:7.0px;color:#2c2c2c;-webkit-text-stroke:0.12px #2c2c2c;transform:scaleX(0.8626);">Jul 18, 2021</span>
<svg class="ic" style="left:716px;top:390.91px" width="10" height="10" viewBox="0 0 20 20" fill="none" stroke="#4463c6" stroke-width="1.800" stroke-linecap="round" stroke-linejoin="round"><path d="M9 3.800H5.200a3 3 0 0 0-3 3V14.200a3 3 0 0 0 3 3H13.800a3 3 0 0 0 3-3V11"/><path d="M8.800 11.800L17.300 3.200" stroke-width="2.900"/></svg>
<svg class="ic" style="left:731px;top:391.31px" width="8" height="9" viewBox="0 0 16 18" fill="none" stroke="#bb2d4b" stroke-linecap="round" stroke-linejoin="round"><path d="M1 4h14" stroke-width="2"/><path d="M5.800 3.200V1.700a.6.600 0 0 1 .6-.6h3.200a.6.600 0 0 1 .6.600V3.200" stroke-width="1.500"/><path d="M2.900 4.800V15.200a1.800 1.800 0 0 0 1.800 1.800h6.600a1.800 1.800 0 0 0 1.800-1.800V4.800" stroke-width="2"/><path d="M6.300 8v6M9.700 8v6" stroke-width="1.500"/></svg>
<div class="abs" style="left:88.7px;top:408.8px;width:661.6px;height:1px;background:#efefef"></div>
<div class="abs" style="left:115px;top:416.2px;width:10.8px;height:10.600px;border-radius:2.5px;background:#0b7ddf"></div>
<span class="t m " style="left:119.40px;top:415px;font-size:5px;color:#cfe6fb;">1</span>
<span class="t m " style="left:130.20px;top:415px;font-size:5px;color:#a8a8a8;transform:scaleX(0.9500);">2</span>
<span class="t m " style="left:141.30px;top:415px;font-size:5px;color:#a8a8a8;transform:scaleX(0.9500);">3</span>
<span class="t m " style="left:151.80px;top:415px;font-size:5px;color:#a8a8a8;transform:scaleX(0.9500);">4</span>
<span class="t m " style="left:162.90px;top:415px;font-size:5px;color:#a8a8a8;transform:scaleX(0.9500);">5</span>
<svg class="ic" style="left:94.2px;top:417.8px" width="3.8" height="4.4" viewBox="0 0 8 9" fill="none" stroke="#b4b4b4" stroke-width="1.200"><path d="M1 0.500v8M7 0.800L2.800 4.500 7 8.200z"/></svg>
<svg class="ic" style="left:107px;top:417.8px" width="3.4" height="4.4" viewBox="0 0 7 9" fill="none" stroke="#b4b4b4" stroke-width="1.100" stroke-linejoin="round"><path d="M6 1L1.200 4.500 6 8z"/></svg>
<svg class="ic" style="left:174.300px;top:417.8px" width="3.4" height="4.4" viewBox="0 0 7 9" fill="none" stroke="#8a8a8a" stroke-width="1.200" stroke-linejoin="round"><path d="M1 1L5.800 4.500 1 8z"/></svg>
<svg class="ic" style="left:186.800px;top:417.8px" width="3.8" height="4.4" viewBox="0 0 8 9" fill="none" stroke="#6a6a6a" stroke-width="1.300"><path d="M7 0.500v8M1 0.800l4.200 3.700L1 8.200z"/></svg>
<span class="t m " style="left:678.80px;top:413px;font-size:5.5px;color:#2b2b2b;font-weight:bold;transform:scaleX(0.8439);">Showing 1 To 10 Of 79 Entries</span>
</body></html>
